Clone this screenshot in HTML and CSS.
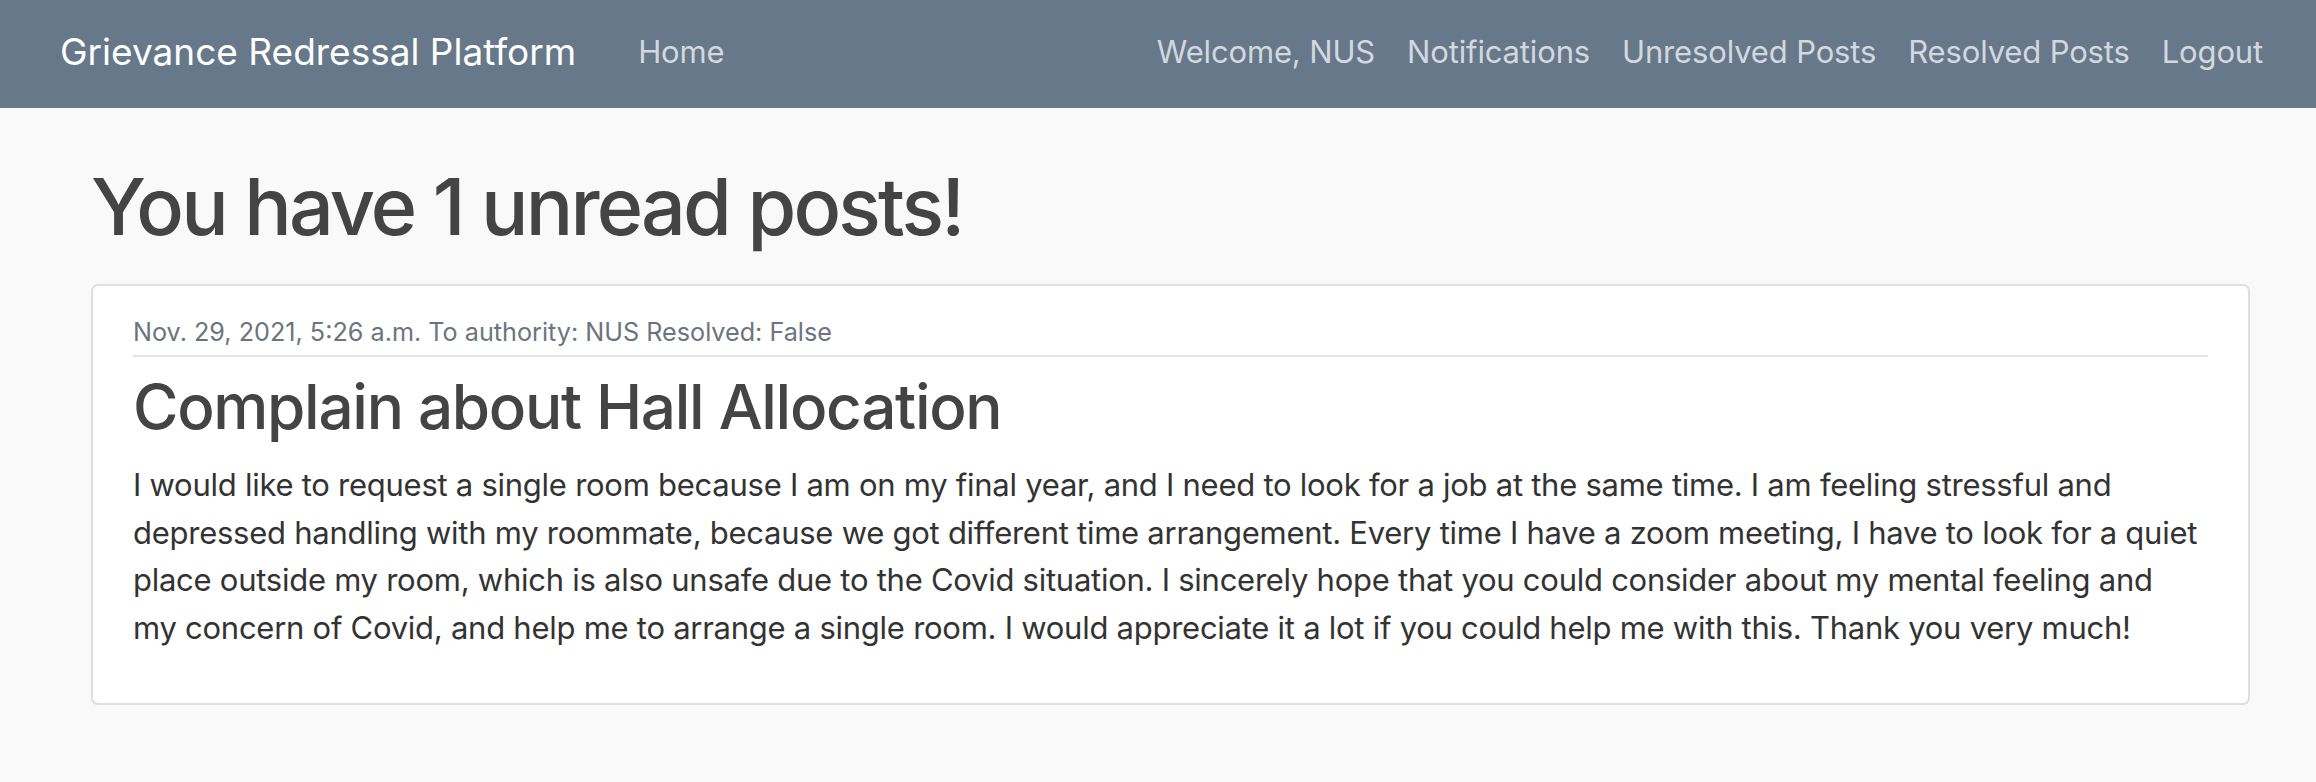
FILE: index.html
```html
<!DOCTYPE html>
<html lang="en">
<head>
<meta charset="utf-8">
<title>Grievance Redressal Platform</title>
<link rel="stylesheet" href="styles.css">
</head>
<body>
<nav class="navbar">
  <a class="brand" href="#">Grievance Redressal Platform</a>
  <ul class="nav nav-left">
    <li><a class="nav-link" href="#">Home</a></li>
  </ul>
  <ul class="nav nav-right">
    <li><a class="nav-link" href="#">Welcome, NUS</a></li>
    <li><a class="nav-link" href="#">Notifications</a></li>
    <li><a class="nav-link" href="#">Unresolved Posts</a></li>
    <li><a class="nav-link" href="#">Resolved Posts</a></li>
    <li><a class="nav-link" href="#">Logout</a></li>
  </ul>
</nav>
<main class="main">
  <h1 class="page-title">You have 1 unread posts!</h1>
  <article class="card">
    <div class="meta">Nov. 29, 2021, 5:26 a.m. To authority: NUS Resolved: False</div>
    <hr class="divider">
    <h2 class="post-title">Complain about Hall Allocation</h2>
    <p class="post-body">I would like to request a single room because I am on my final year, and I need to look for a job at the same time. I am feeling stressful and depressed handling with my roommate, because we got different time arrangement. Every time I have a zoom meeting, I have to look for a quiet place outside my room, which is also unsafe due to the Covid situation. I sincerely hope that you could consider about my mental feeling and my&nbsp;concern of Covid, and help me to arrange a single room. I would appreciate it a lot if you could help me with this. Thank you very much!</p>
  </article>
</main>
</body>
</html>
```
FILE: styles.css
```css
* { box-sizing: border-box; }
html, body { margin: 0; padding: 0; }
body {
  background: #f9f9f9;
  font-family: Inter, "Noto Sans", "Liberation Sans", sans-serif;
  color: #333;
}
.navbar {
  height: 108px;
  background: #66788a;
  display: flex;
  align-items: center;
  padding: 0 37px 5px 60px;
}
.brand {
  color: #ffffff;
  text-decoration: none;
  font-size: 37px;
  margin-right: 46px;
  white-space: nowrap;
}
.nav {
  list-style: none;
  margin: 0;
  padding: 0;
  display: flex;
}
.nav-right { margin-left: auto; }
.nav-link {
  display: block;
  padding: 0 16px;
  color: #d2d8de;
  text-decoration: none;
  font-size: 31px;
  letter-spacing: -0.15px;
  white-space: nowrap;
}
.main {
  padding: 50px 66px 40px 91px;
}
.page-title {
  margin: 0 0 30px;
  font-size: 79px;
  line-height: 96px;
  font-weight: 500;
  letter-spacing: -2.8px;
  color: #444;
}
.card {
  background: #fff;
  border: 2px solid #dfdfdf;
  border-radius: 7px;
  padding: 30px 40px 52px;
}
.meta {
  font-size: 25.2px;
  line-height: 33px;
  color: #6c757d;
}
.divider {
  margin: 6px 0 13px;
  border: 0;
  border-top: 2px solid #e3e3e3;
}
.post-title {
  margin: 0 0 17px;
  font-size: 62px;
  line-height: 74px;
  font-weight: 500;
  letter-spacing: -1.3px;
  color: #444;
}
.post-body {
  margin: 0 3px 0 0;
  font-size: 31px;
  line-height: 47.5px;
  letter-spacing: -0.26px;
  color: #333;
}
```
